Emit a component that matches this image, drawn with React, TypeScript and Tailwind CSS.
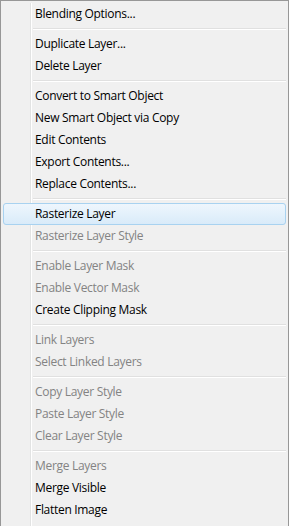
import React from "react";

type Item =
  | { type: "sep" }
  | { type: "item"; label: string; disabled?: boolean; active?: boolean };

const items: Item[] = [
  { type: "item", label: "Blending Options..." },
  { type: "sep" },
  { type: "item", label: "Duplicate Layer..." },
  { type: "item", label: "Delete Layer" },
  { type: "sep" },
  { type: "item", label: "Convert to Smart Object" },
  { type: "item", label: "New Smart Object via Copy" },
  { type: "item", label: "Edit Contents" },
  { type: "item", label: "Export Contents..." },
  { type: "item", label: "Replace Contents..." },
  { type: "sep" },
  { type: "item", label: "Rasterize Layer", active: true },
  { type: "item", label: "Rasterize Layer Style", disabled: true },
  { type: "sep" },
  { type: "item", label: "Enable Layer Mask", disabled: true },
  { type: "item", label: "Enable Vector Mask", disabled: true },
  { type: "item", label: "Create Clipping Mask" },
  { type: "sep" },
  { type: "item", label: "Link Layers", disabled: true },
  { type: "item", label: "Select Linked Layers", disabled: true },
  { type: "sep" },
  { type: "item", label: "Copy Layer Style", disabled: true },
  { type: "item", label: "Paste Layer Style", disabled: true },
  { type: "item", label: "Clear Layer Style", disabled: true },
  { type: "sep" },
  { type: "item", label: "Merge Layers", disabled: true },
  { type: "item", label: "Merge Visible" },
  { type: "item", label: "Flatten Image" },
];

function Gutter() {
  return (
    <div className="flex self-stretch shrink-0">
      <div className="w-[28px] border-r border-[#e2e3e3]" />
      <div className="w-px bg-white" />
    </div>
  );
}

export default function App() {
  return (
    <div
      className="w-[289px] h-[526px] overflow-hidden bg-[#f0f0f0] border-l border-t border-r border-[#979797] px-[2px] pt-[2px] flex flex-col text-[12px] leading-none tracking-[-0.3px]"
      style={{ fontFamily: '"Open Sans", "Noto Sans", sans-serif' }}
    >
      {items.map((it, i) => {
        if (it.type === "sep") {
          return (
            <div key={i} className="h-[8px] flex shrink-0">
              <Gutter />
              <div className="flex-1 flex flex-col justify-center pl-px">
                <div className="h-px bg-[#e0e0e0]" />
                <div className="h-px bg-white" />
              </div>
            </div>
          );
        }
        if (it.active) {
          return (
            <div
              key={i}
              className="h-[22px] flex items-center shrink-0 rounded-[3px] border border-[#a8d2f0] bg-gradient-to-b from-[#eef6fd] to-[#d9ebf9]"
            >
              <div className="w-[28px] shrink-0" />
              <span className="pl-[3px] text-black">{it.label}</span>
            </div>
          );
        }
        return (
          <div key={i} className="h-[22px] flex items-center shrink-0">
            <Gutter />
            <span
              className={
                "pl-[3px] " + (it.disabled ? "text-[#838383]" : "text-black")
              }
            >
              {it.label}
            </span>
          </div>
        );
      })}
      <div className="flex-1 flex">
        <Gutter />
      </div>
    </div>
  );
}
